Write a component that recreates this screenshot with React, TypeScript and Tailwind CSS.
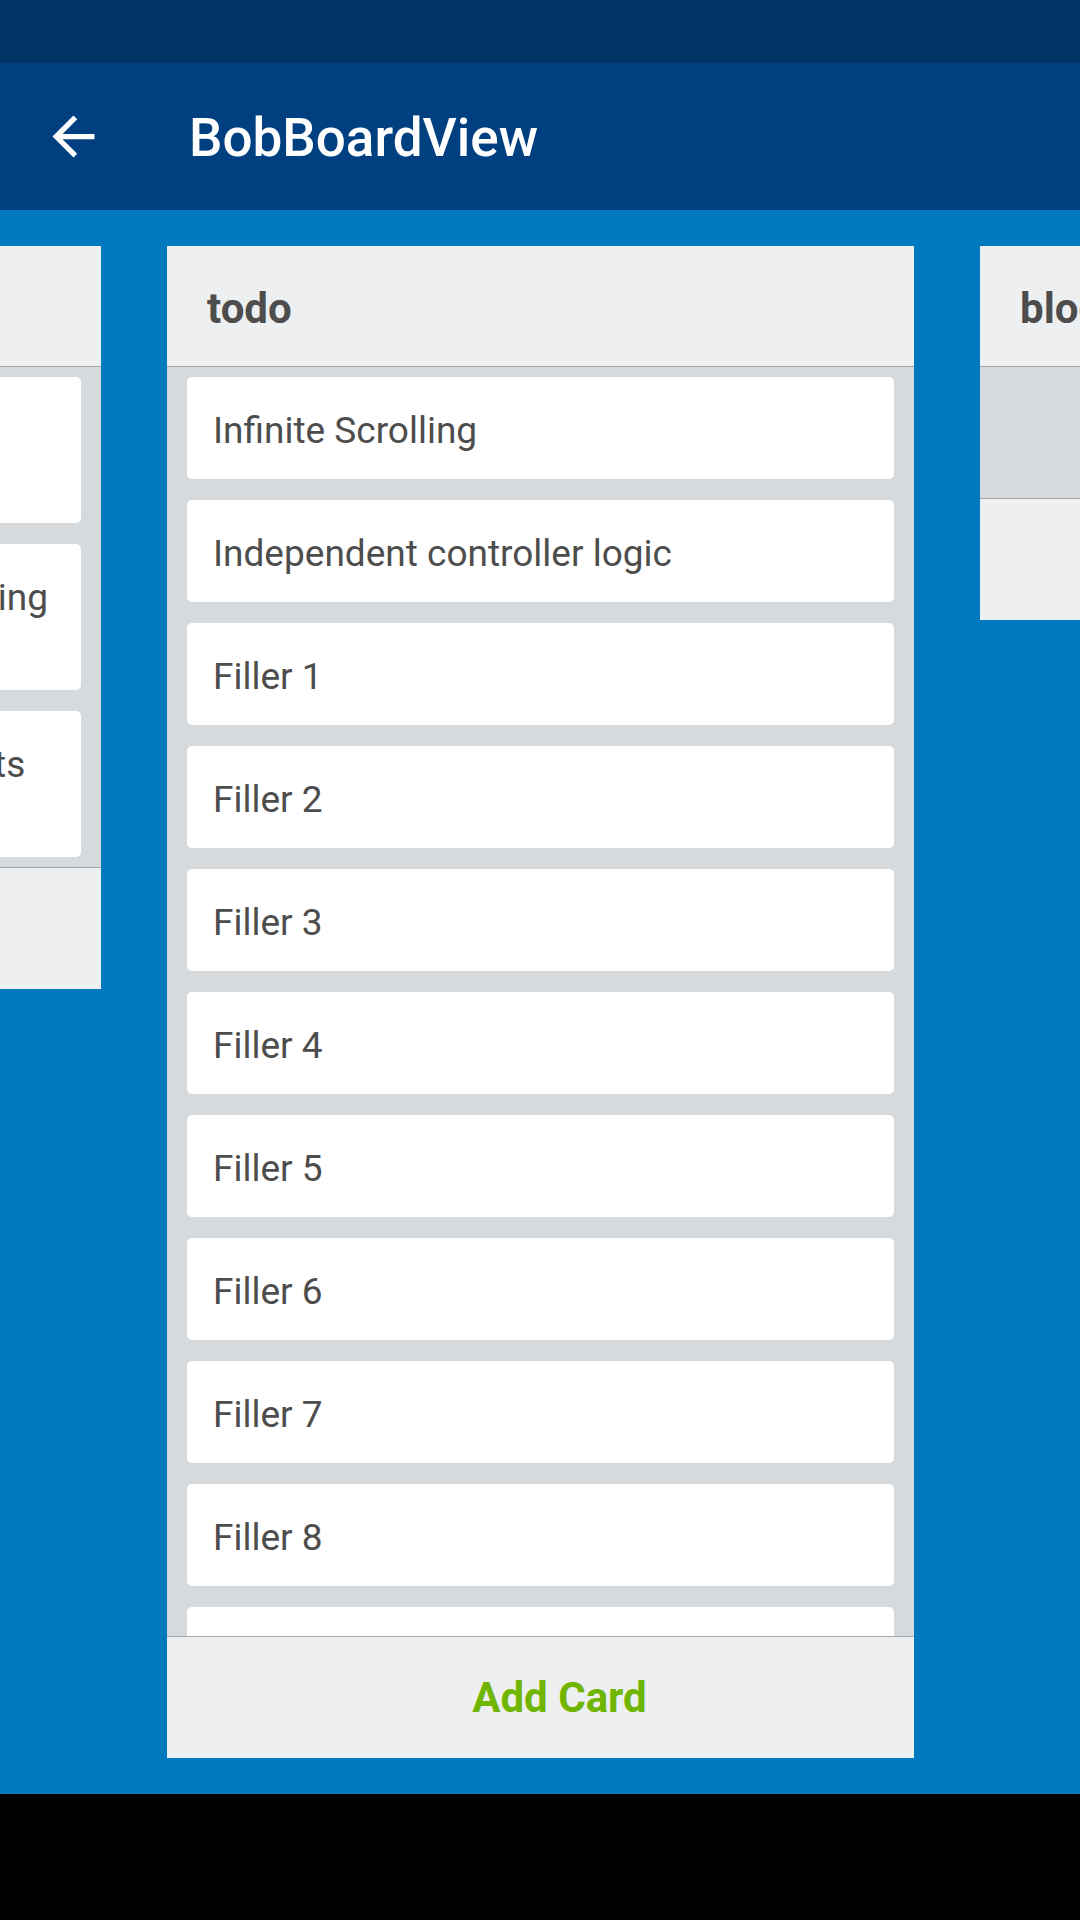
const lists = [
  {
    id: 'done',
    title: 'done',
    cards: [
      'Drag and drop cards between lists seamlessly',
      'Auto horizontal scrolling while dragging cards',
      'Has custom list and card components via props',
    ],
  },
  {
    id: 'todo',
    title: 'todo',
    cards: [
      'Infinite Scrolling',
      'Independent controller logic',
      'Filler 1',
      'Filler 2',
      'Filler 3',
      'Filler 4',
      'Filler 5',
      'Filler 6',
      'Filler 7',
      'Filler 8',
      'Filler 9',
    ],
  },
  {
    id: 'blocked',
    title: 'blocked',
    cards: [] as string[],
  },
];

function BackArrow() {
  return (
    <svg viewBox="0 0 24 24" className="w-[63px] h-[63px] fill-white">
      <path d="M20 11H7.83l5.59-5.59L12 4l-8 8 8 8 1.41-1.41L7.83 13H20v-2z" />
    </svg>
  );
}

function BoardList({ title, cards }: { title: string; cards: string[] }) {
  return (
    <div className="w-[747px] shrink-0 max-h-full flex flex-col bg-[#edeff0]">
      {/* List header */}
      <div className="h-[121px] shrink-0 flex items-center px-[40px] pt-[5px] border-b border-[#a3a5a7]">
        <span className="text-[42px] font-bold text-[#4d4d4d]">{title}</span>
      </div>

      {/* Cards */}
      <div className="flex-1 min-h-[131px] overflow-hidden bg-[#d6dadc] px-[20px] py-[10px] flex flex-col gap-[21px]">
        {cards.map((card) => (
          <div
            key={card}
            className="shrink-0 bg-white rounded-[5px] pl-[26px] pr-[24px] pt-[32px] pb-[26px] text-[37px] leading-[44px] text-[#4d4d4d]"
          >
            {card}
          </div>
        ))}
      </div>

      {/* Footer */}
      <div className="h-[122px] shrink-0 flex items-center justify-center pl-[38px] border-t border-[#a3a5a7]">
        <span className="text-[42px] font-bold text-[#70b500]">Add Card</span>
      </div>
    </div>
  );
}

export default function App() {
  return (
    <div className="w-[1080px] h-[1920px] flex flex-col overflow-hidden font-[family-name:Roboto,sans-serif]">
      {/* Status bar */}
      <div className="h-[63px] shrink-0 bg-[#003366]" />

      {/* App bar */}
      <div className="h-[147px] shrink-0 bg-[#004080] flex items-center pl-[42px]">
        <BackArrow />
        <h1 className="ml-[84px] pt-[5px] text-[53px] font-medium text-white">BobBoardView</h1>
      </div>

      {/* Board */}
      <div className="flex-1 min-h-0 bg-[#0079bf] overflow-hidden pt-[36px] pb-[36px]">
        <div className="h-full flex items-start gap-[66px] ml-[-646px]">
          {lists.map((list) => (
            <BoardList key={list.id} title={list.title} cards={list.cards} />
          ))}
        </div>
      </div>

      {/* Navigation bar */}
      <div className="h-[126px] shrink-0 bg-black" />
    </div>
  );
}
